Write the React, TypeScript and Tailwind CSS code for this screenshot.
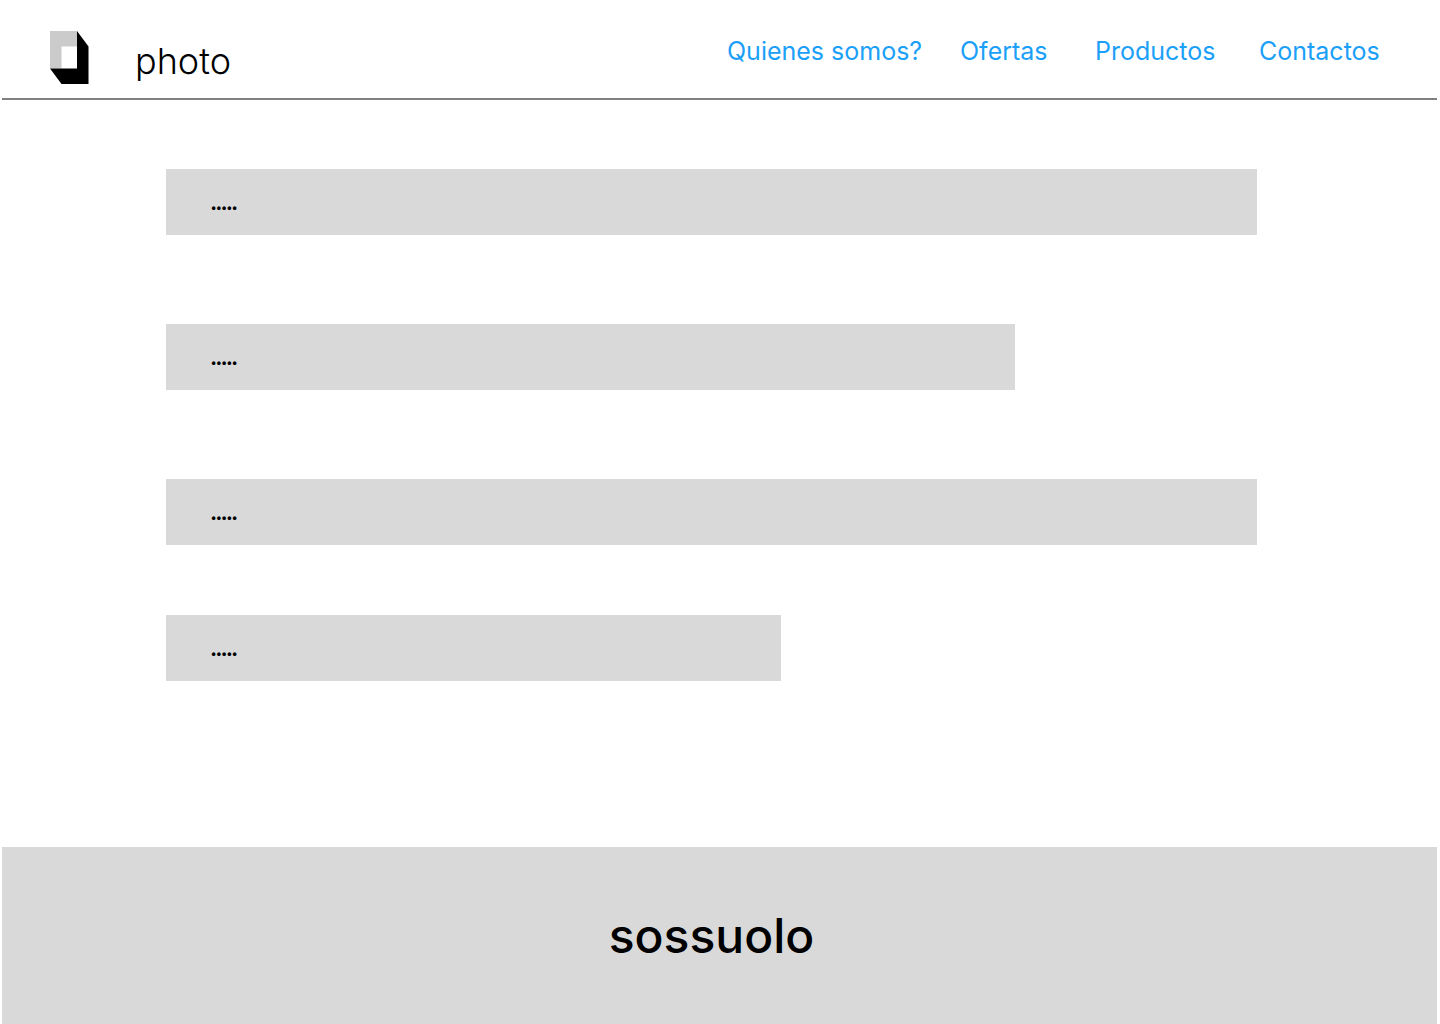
const links = [
  { label: "Quienes somos?", href: "#quienes", width: "w-[233px]" },
  { label: "Ofertas", href: "#ofertas", width: "w-[135px]" },
  { label: "Productos", href: "#productos", width: "w-[164px]" },
  { label: "Contactos", href: "#contactos", width: "w-[178px]" },
];

const bars = [
  { id: 1, className: "w-full" },
  { id: 2, className: "mt-[89px] w-[77.8%]" },
  { id: 3, className: "mt-[89px] w-full" },
  { id: 4, className: "mt-[70px] w-[56.4%]" },
];

function Logo() {
  return (
    <svg width="39" height="53" viewBox="0 0 39 53" aria-hidden="true">
      <path d="M0 0H27V15.5H11.5V37.5H0Z" fill="#cbcbcb" />
      <path d="M27 0L38.5 15.5V53H11.5L0 37.5H27Z" fill="#000" />
    </svg>
  );
}

export default function App() {
  return (
    <div className="flex min-h-screen flex-col bg-white pr-[3px] pl-[2px] font-['Inter',sans-serif] text-black">
      <header className="flex h-[100px] justify-between border-b-2 border-[#808080]">
        <a href="#inicio" className="flex items-start gap-[46px] pt-[31px] pl-12">
          <Logo />
          <span className="pt-[10px] text-[36px] leading-10 font-light">photo</span>
        </a>
        <nav className="flex pt-[35px] text-[25px] leading-8 text-[#1b9ff8]">
          {links.map((link) => (
            <a key={link.href} href={link.href} className={`${link.width} whitespace-nowrap`}>
              {link.label}
            </a>
          ))}
        </nav>
      </header>

      <main className="flex-1 pt-[69px] pr-[180px] pb-10 pl-[164px]">
        {bars.map((bar) => (
          <div key={bar.id} className={`${bar.className} flex h-[66px] items-center bg-[#d9d9d9] pl-[45px]`}>
            <p className="font-['Lato',sans-serif] text-[22px] leading-6 font-black">.....</p>
          </div>
        ))}
      </main>

      <footer className="flex h-[177px] items-center justify-center bg-[#d9d9d9] pr-4">
        <p className="text-5xl font-medium">sossuolo</p>
      </footer>
    </div>
  );
}
